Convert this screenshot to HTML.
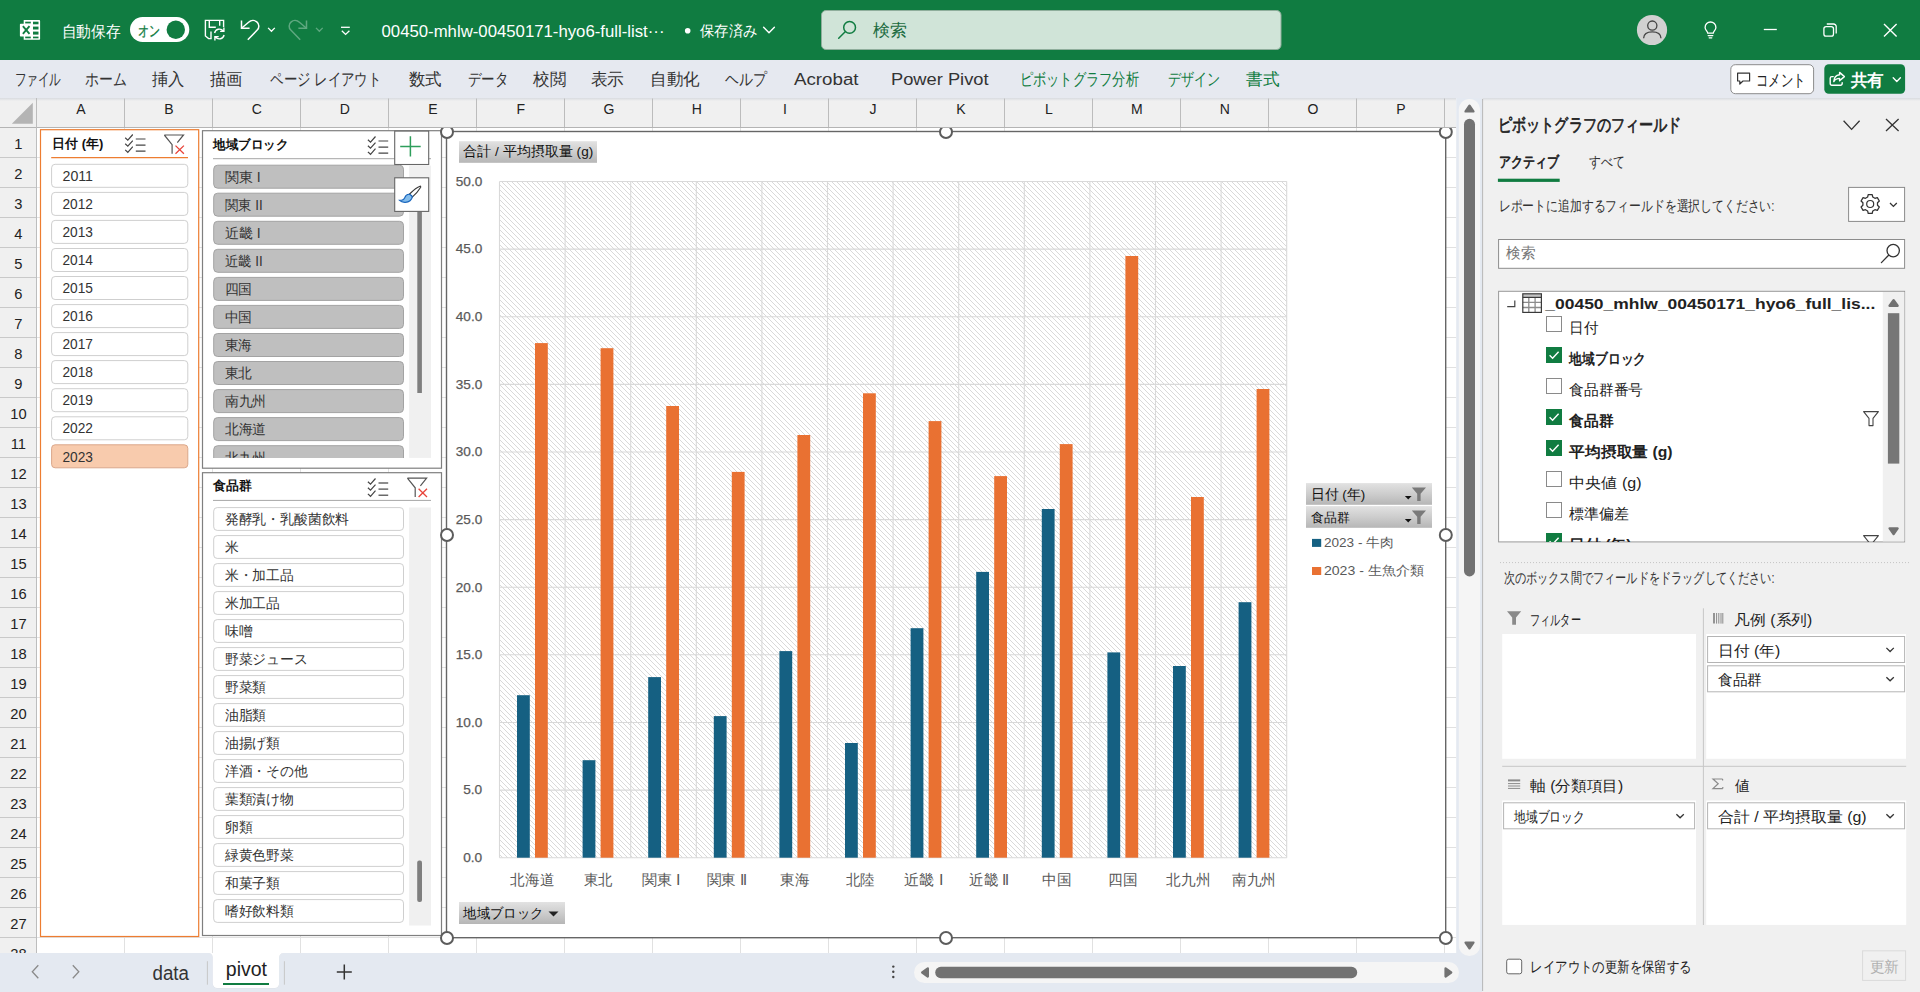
<!DOCTYPE html><html><head><meta charset="utf-8"><title>Excel</title><style>*{margin:0;padding:0}html,body{width:1920px;height:992px;overflow:hidden;background:#fff}svg{display:block;font-family:"Liberation Sans",sans-serif}</style></head><body>
<svg width="1920" height="992" viewBox="0 0 1920 992">
<defs>
<pattern id="hat" width="5" height="5" patternUnits="userSpaceOnUse"><rect width="5" height="5" fill="#fff"/><path d="M-1 -1 L6 6 M-1 4 L1 6 M4 -1 L6 1" stroke="#d6d6d6" stroke-width="0.92"/></pattern>
<linearGradient id="btn" x1="0" y1="0" x2="0" y2="1"><stop offset="0" stop-color="#e2e2e2"/><stop offset="0.5" stop-color="#cdcdcd"/><stop offset="1" stop-color="#b6b6b6"/></linearGradient>
<linearGradient id="hsh" x1="0" y1="0" x2="0" y2="1"><stop offset="0" stop-color="#d8dbe0"/><stop offset="1" stop-color="#f0f0f0"/></linearGradient>
<clipPath id="cs2"><rect x="203" y="164" width="237" height="294"/></clipPath>
<clipPath id="cfl"><rect x="1499" y="292" width="405" height="250"/></clipPath>
<clipPath id="cgrid"><rect x="0" y="98" width="1456.2" height="855"/></clipPath>
<clipPath id="ccell"><rect x="37" y="128" width="1419.2" height="825"/></clipPath>
</defs>
<rect x="0" y="0" width="1920" height="60" fill="#107c41"/>
<path d="M23.7 20.1 H39.3 a0.8 0.8 0 0 1 0.8 0.8 V39 a0.8 0.8 0 0 1 -0.8 0.8 H23.7 V36.4 H20.6 a0.7 0.7 0 0 1 -0.7 -0.7 V24.4 a0.7 0.7 0 0 1 0.7 -0.7 H23.7 Z" fill="#fff" stroke="none" stroke-width="0"/>
<rect x="33" y="21.7" width="5.5" height="2.6" fill="#107c41"/>
<rect x="33" y="26.6" width="5.5" height="2.9" fill="#107c41"/>
<rect x="33" y="31.6" width="5.5" height="3.0" fill="#107c41"/>
<rect x="33" y="36.6" width="5.5" height="1.7" fill="#107c41"/>
<rect x="25.2" y="21.7" width="5.6" height="1.7" fill="#107c41"/>
<rect x="25.2" y="36.6" width="5.6" height="1.7" fill="#107c41"/>
<path d="M22.9 26.2 L29.5 33.8 M29.5 26.2 L22.9 33.8" fill="none" stroke="#107c41" stroke-width="1.9"/>
<text x="61.5" y="36.6" font-size="16.4" fill="#fff" textLength="59.0" lengthAdjust="spacingAndGlyphs">自動保存</text>
<rect x="130" y="17" width="59.3" height="25" fill="#fff" rx="12.5"/>
<text x="137.6" y="35.6" font-size="15" fill="#107c41" stroke="#107c41" stroke-width="0.3" textLength="22.0" lengthAdjust="spacingAndGlyphs">オン</text>
<circle cx="175.8" cy="29.8" r="9.2" fill="#107c41"/>
<g stroke="#fff" fill="none" stroke-width="1.4">
<path d="M211.6 38.6 H208.6 L205.4 36 V20.4 H223.6 V27"/>
<path d="M209.3 20.6 V27.2 H215.8 M219.7 20.6 V25.8"/>
<path d="M211 31.6 V38.4"/>
<path d="M214.6 33 a4.9 4.9 0 0 1 8.6 -2 M223.9 27.6 V31.4 H220.1"/>
<path d="M224.1 35 a4.9 4.9 0 0 1 -8.6 2 M214.9 40.4 V36.6 H218.7"/>
</g>
<g stroke="#fff" fill="none" stroke-width="1.5">
<path d="M241.5 20.6 V28.3 H249.6"/>
<path d="M241.8 28 L248.6 22.2 C251 20.2 254.6 20 256.8 21.9 C259.4 24.1 259.5 27.7 257.2 30.1 L247.8 39.8"/>
<path d="M268.1 27.9 L271.45 31.3 L274.8 27.9" stroke-width="1.3"/>
</g>
<g stroke="#5fa880" fill="none" stroke-width="1.5">
<path d="M306.5 20.6 V28.3 H298.4"/>
<path d="M306.2 28 L299.4 22.2 C297 20.2 293.4 20 291.2 21.9 C288.6 24.1 288.5 27.7 290.8 30.1 L300.2 39.8"/>
<path d="M316 27.9 L319.35 31.3 L322.7 27.9" stroke-width="1.3"/>
</g>
<g stroke="#fff" fill="none" stroke-width="1.3"><path d="M341 27.3 H349.8"/><path d="M341.8 30.7 L345.6 34.4 L349.4 30.7"/></g>
<text x="381.5" y="36.5" font-size="16" fill="#fff" textLength="283.0" lengthAdjust="spacingAndGlyphs">00450-mhlw-00450171-hyo6-full-list···</text>
<circle cx="687.7" cy="30.8" r="2.8" fill="#fff"/>
<text x="699.8" y="36.3" font-size="15" fill="#fff" textLength="57.5" lengthAdjust="spacingAndGlyphs">保存済み</text>
<path d="M763.6 27.2 L769 32.8 L774.4 27.2" fill="none" stroke="#fff" stroke-width="1.4" stroke-linecap="round" stroke-linejoin="round"/>
<rect x="821.5" y="10.5" width="459.5" height="39" fill="#d0e4d8" stroke="#8fae9c" stroke-width="1" rx="4.5"/>
<g stroke="#107c41" fill="none" stroke-width="1.5" stroke-linecap="round"><circle cx="849.6" cy="27.4" r="5.9"/><path d="M845.2 31.8 L838.7 38.3"/></g>
<text x="872.9" y="36.3" font-size="16.5" fill="#1b6b3f" textLength="34.0" lengthAdjust="spacingAndGlyphs">検索</text>
<circle cx="1652" cy="30" r="15.1" fill="#d1d1d1"/>
<g stroke="#444" fill="none" stroke-width="1.3"><circle cx="1652.3" cy="25.6" r="4.6"/><path d="M1643.6 38.2 C1643.8 33.6 1647.5 31.8 1652.3 31.8 C1657.1 31.8 1660.8 33.6 1661 38.2"/></g>
<g stroke="#fff" fill="none" stroke-width="1.3" stroke-linecap="round" stroke-linejoin="round">
<path d="M1707.7 33.2 C1707.7 31.4 1705.1 30.2 1705.1 27.4 a5.4 5.4 0 0 1 10.8 0 C1715.9 30.2 1713.3 31.4 1713.3 33.2 Z"/>
<path d="M1708.2 35.6 H1712.8 M1709.2 37.8 H1711.8"/></g>
<line x1="1763.8" y1="29.5" x2="1776.8" y2="29.5" stroke="#fff" stroke-width="1.3"/>
<g stroke="#fff" fill="none" stroke-width="1.3"><rect x="1823.9" y="26.6" width="9.6" height="9.6" rx="2.2"/><path d="M1826.8 24 H1833.6 a2.6 2.6 0 0 1 2.6 2.6 V33.4"/></g>
<path d="M1884 24 L1896.6 36.4 M1896.6 24 L1884 36.4" fill="none" stroke="#fff" stroke-width="1.4"/>
<rect x="0" y="60" width="1920" height="38" fill="#e6e9f0"/>
<text x="14.6" y="85.2" font-size="17.3" fill="#333" textLength="46.5" lengthAdjust="spacingAndGlyphs">ファイル</text>
<text x="84.8" y="85.2" font-size="17.3" fill="#333" textLength="41.7" lengthAdjust="spacingAndGlyphs">ホーム</text>
<text x="151.5" y="85.2" font-size="17.3" fill="#333" textLength="32.5" lengthAdjust="spacingAndGlyphs">挿入</text>
<text x="209.8" y="85.2" font-size="17.3" fill="#333" textLength="32.5" lengthAdjust="spacingAndGlyphs">描画</text>
<text x="270.2" y="85.2" font-size="17.3" fill="#333" textLength="111.1" lengthAdjust="spacingAndGlyphs">ページ レイアウト</text>
<text x="408.5" y="85.2" font-size="17.3" fill="#333" textLength="33.0" lengthAdjust="spacingAndGlyphs">数式</text>
<text x="467.5" y="85.2" font-size="17.3" fill="#333" textLength="40.5" lengthAdjust="spacingAndGlyphs">データ</text>
<text x="533.0" y="85.2" font-size="17.3" fill="#333" textLength="33.0" lengthAdjust="spacingAndGlyphs">校閲</text>
<text x="590.8" y="85.2" font-size="17.3" fill="#333" textLength="33.4" lengthAdjust="spacingAndGlyphs">表示</text>
<text x="650.2" y="85.2" font-size="17.3" fill="#333" textLength="49.6" lengthAdjust="spacingAndGlyphs">自動化</text>
<text x="724.8" y="85.2" font-size="17.3" fill="#333" textLength="41.7" lengthAdjust="spacingAndGlyphs">ヘルプ</text>
<text x="794.0" y="85.2" font-size="17.3" fill="#333" textLength="64.5" lengthAdjust="spacingAndGlyphs">Acrobat</text>
<text x="891.0" y="85.2" font-size="17.3" fill="#333" textLength="97.6" lengthAdjust="spacingAndGlyphs">Power Pivot</text>
<text x="1019.7" y="85.2" font-size="17.3" fill="#107c41" textLength="119.2" lengthAdjust="spacingAndGlyphs">ピボットグラフ分析</text>
<text x="1167.9" y="85.2" font-size="17.3" fill="#107c41" textLength="52.2" lengthAdjust="spacingAndGlyphs">デザイン</text>
<text x="1246.4" y="85.2" font-size="17.3" fill="#107c41" textLength="33.3" lengthAdjust="spacingAndGlyphs">書式</text>
<rect x="1730.8" y="64.7" width="82.8" height="29" fill="#fff" stroke="#8c8c8c" stroke-width="1" rx="4.5"/>
<path d="M1737.6 73.2 H1749.6 V81 H1743 L1739.8 84 V81 H1737.6 Z" fill="none" stroke="#333" stroke-width="1.2" stroke-linejoin="round"/>
<text x="1755.8" y="86.2" font-size="16.5" fill="#222" textLength="49.5" lengthAdjust="spacingAndGlyphs">コメント</text>
<rect x="1824.3" y="64.2" width="80.8" height="29.6" fill="#107c41" rx="4.5"/>
<g stroke="#fff" fill="none" stroke-width="1.4" stroke-linecap="round" stroke-linejoin="round">
<path d="M1833.2 76.6 H1831.8 a1.6 1.6 0 0 0 -1.6 1.6 V83.6 a1.6 1.6 0 0 0 1.6 1.6 H1840.6 a1.6 1.6 0 0 0 1.6 -1.6 V82.6"/>
<path d="M1839.6 72.4 L1844.4 76.6 L1839.6 80.8 V78.4 C1837 78.4 1835 79.4 1833.8 81.6 C1834 77.6 1836.2 75.2 1839.6 74.8 Z"/></g>
<text x="1850.5" y="86.2" font-size="17" fill="#fff" textLength="33.0" lengthAdjust="spacingAndGlyphs" font-weight="bold">共有</text>
<path d="M1893.2 77.8 L1896.8 81.4 L1900.4 77.8" fill="none" stroke="#fff" stroke-width="1.4" stroke-linecap="round" stroke-linejoin="round"/>
<rect x="0" y="98" width="1456.2" height="855" fill="#fff"/>
<g clip-path="url(#cgrid)">
<line x1="36.5" y1="127" x2="36.5" y2="953" stroke="#e1e1e1" stroke-width="1"/>
<line x1="124.5" y1="127" x2="124.5" y2="953" stroke="#e1e1e1" stroke-width="1"/>
<line x1="212.5" y1="127" x2="212.5" y2="953" stroke="#e1e1e1" stroke-width="1"/>
<line x1="300.5" y1="127" x2="300.5" y2="953" stroke="#e1e1e1" stroke-width="1"/>
<line x1="388.5" y1="127" x2="388.5" y2="953" stroke="#e1e1e1" stroke-width="1"/>
<line x1="476.5" y1="127" x2="476.5" y2="953" stroke="#e1e1e1" stroke-width="1"/>
<line x1="564.5" y1="127" x2="564.5" y2="953" stroke="#e1e1e1" stroke-width="1"/>
<line x1="652.5" y1="127" x2="652.5" y2="953" stroke="#e1e1e1" stroke-width="1"/>
<line x1="740.5" y1="127" x2="740.5" y2="953" stroke="#e1e1e1" stroke-width="1"/>
<line x1="828.5" y1="127" x2="828.5" y2="953" stroke="#e1e1e1" stroke-width="1"/>
<line x1="916.5" y1="127" x2="916.5" y2="953" stroke="#e1e1e1" stroke-width="1"/>
<line x1="1004.5" y1="127" x2="1004.5" y2="953" stroke="#e1e1e1" stroke-width="1"/>
<line x1="1092.5" y1="127" x2="1092.5" y2="953" stroke="#e1e1e1" stroke-width="1"/>
<line x1="1180.5" y1="127" x2="1180.5" y2="953" stroke="#e1e1e1" stroke-width="1"/>
<line x1="1268.5" y1="127" x2="1268.5" y2="953" stroke="#e1e1e1" stroke-width="1"/>
<line x1="1356.5" y1="127" x2="1356.5" y2="953" stroke="#e1e1e1" stroke-width="1"/>
<line x1="1444.5" y1="127" x2="1444.5" y2="953" stroke="#e1e1e1" stroke-width="1"/>
<line x1="37" y1="157.5" x2="1459" y2="157.5" stroke="#e1e1e1" stroke-width="1"/>
<line x1="37" y1="187.5" x2="1459" y2="187.5" stroke="#e1e1e1" stroke-width="1"/>
<line x1="37" y1="217.5" x2="1459" y2="217.5" stroke="#e1e1e1" stroke-width="1"/>
<line x1="37" y1="247.5" x2="1459" y2="247.5" stroke="#e1e1e1" stroke-width="1"/>
<line x1="37" y1="277.5" x2="1459" y2="277.5" stroke="#e1e1e1" stroke-width="1"/>
<line x1="37" y1="307.5" x2="1459" y2="307.5" stroke="#e1e1e1" stroke-width="1"/>
<line x1="37" y1="337.5" x2="1459" y2="337.5" stroke="#e1e1e1" stroke-width="1"/>
<line x1="37" y1="367.5" x2="1459" y2="367.5" stroke="#e1e1e1" stroke-width="1"/>
<line x1="37" y1="397.5" x2="1459" y2="397.5" stroke="#e1e1e1" stroke-width="1"/>
<line x1="37" y1="427.5" x2="1459" y2="427.5" stroke="#e1e1e1" stroke-width="1"/>
<line x1="37" y1="457.5" x2="1459" y2="457.5" stroke="#e1e1e1" stroke-width="1"/>
<line x1="37" y1="487.5" x2="1459" y2="487.5" stroke="#e1e1e1" stroke-width="1"/>
<line x1="37" y1="517.5" x2="1459" y2="517.5" stroke="#e1e1e1" stroke-width="1"/>
<line x1="37" y1="547.5" x2="1459" y2="547.5" stroke="#e1e1e1" stroke-width="1"/>
<line x1="37" y1="577.5" x2="1459" y2="577.5" stroke="#e1e1e1" stroke-width="1"/>
<line x1="37" y1="607.5" x2="1459" y2="607.5" stroke="#e1e1e1" stroke-width="1"/>
<line x1="37" y1="637.5" x2="1459" y2="637.5" stroke="#e1e1e1" stroke-width="1"/>
<line x1="37" y1="667.5" x2="1459" y2="667.5" stroke="#e1e1e1" stroke-width="1"/>
<line x1="37" y1="697.5" x2="1459" y2="697.5" stroke="#e1e1e1" stroke-width="1"/>
<line x1="37" y1="727.5" x2="1459" y2="727.5" stroke="#e1e1e1" stroke-width="1"/>
<line x1="37" y1="757.5" x2="1459" y2="757.5" stroke="#e1e1e1" stroke-width="1"/>
<line x1="37" y1="787.5" x2="1459" y2="787.5" stroke="#e1e1e1" stroke-width="1"/>
<line x1="37" y1="817.5" x2="1459" y2="817.5" stroke="#e1e1e1" stroke-width="1"/>
<line x1="37" y1="847.5" x2="1459" y2="847.5" stroke="#e1e1e1" stroke-width="1"/>
<line x1="37" y1="877.5" x2="1459" y2="877.5" stroke="#e1e1e1" stroke-width="1"/>
<line x1="37" y1="907.5" x2="1459" y2="907.5" stroke="#e1e1e1" stroke-width="1"/>
<line x1="37" y1="937.5" x2="1459" y2="937.5" stroke="#e1e1e1" stroke-width="1"/>
<line x1="37" y1="967.5" x2="1459" y2="967.5" stroke="#e1e1e1" stroke-width="1"/>
<rect x="0" y="98" width="1459" height="29.5" fill="#f0f0f0"/>
<rect x="0" y="98" width="1459" height="3" fill="url(#hsh)"/>
<rect x="0" y="127" width="37" height="826" fill="#f0f0f0"/>
<text x="80.9" y="113.8" font-size="14" fill="#222" text-anchor="middle">A</text>
<line x1="124.5" y1="98.5" x2="124.5" y2="127" stroke="#bcbcbc" stroke-width="1"/>
<text x="168.9" y="113.8" font-size="14" fill="#222" text-anchor="middle">B</text>
<line x1="212.5" y1="98.5" x2="212.5" y2="127" stroke="#bcbcbc" stroke-width="1"/>
<text x="256.9" y="113.8" font-size="14" fill="#222" text-anchor="middle">C</text>
<line x1="300.5" y1="98.5" x2="300.5" y2="127" stroke="#bcbcbc" stroke-width="1"/>
<text x="344.9" y="113.8" font-size="14" fill="#222" text-anchor="middle">D</text>
<line x1="388.5" y1="98.5" x2="388.5" y2="127" stroke="#bcbcbc" stroke-width="1"/>
<text x="432.9" y="113.8" font-size="14" fill="#222" text-anchor="middle">E</text>
<line x1="476.5" y1="98.5" x2="476.5" y2="127" stroke="#bcbcbc" stroke-width="1"/>
<text x="520.9" y="113.8" font-size="14" fill="#222" text-anchor="middle">F</text>
<line x1="564.5" y1="98.5" x2="564.5" y2="127" stroke="#bcbcbc" stroke-width="1"/>
<text x="608.9" y="113.8" font-size="14" fill="#222" text-anchor="middle">G</text>
<line x1="652.5" y1="98.5" x2="652.5" y2="127" stroke="#bcbcbc" stroke-width="1"/>
<text x="696.9" y="113.8" font-size="14" fill="#222" text-anchor="middle">H</text>
<line x1="740.5" y1="98.5" x2="740.5" y2="127" stroke="#bcbcbc" stroke-width="1"/>
<text x="784.9" y="113.8" font-size="14" fill="#222" text-anchor="middle">I</text>
<line x1="828.5" y1="98.5" x2="828.5" y2="127" stroke="#bcbcbc" stroke-width="1"/>
<text x="872.9" y="113.8" font-size="14" fill="#222" text-anchor="middle">J</text>
<line x1="916.5" y1="98.5" x2="916.5" y2="127" stroke="#bcbcbc" stroke-width="1"/>
<text x="960.9" y="113.8" font-size="14" fill="#222" text-anchor="middle">K</text>
<line x1="1004.5" y1="98.5" x2="1004.5" y2="127" stroke="#bcbcbc" stroke-width="1"/>
<text x="1048.9" y="113.8" font-size="14" fill="#222" text-anchor="middle">L</text>
<line x1="1092.5" y1="98.5" x2="1092.5" y2="127" stroke="#bcbcbc" stroke-width="1"/>
<text x="1136.9" y="113.8" font-size="14" fill="#222" text-anchor="middle">M</text>
<line x1="1180.5" y1="98.5" x2="1180.5" y2="127" stroke="#bcbcbc" stroke-width="1"/>
<text x="1224.9" y="113.8" font-size="14" fill="#222" text-anchor="middle">N</text>
<line x1="1268.5" y1="98.5" x2="1268.5" y2="127" stroke="#bcbcbc" stroke-width="1"/>
<text x="1312.9" y="113.8" font-size="14" fill="#222" text-anchor="middle">O</text>
<line x1="1356.5" y1="98.5" x2="1356.5" y2="127" stroke="#bcbcbc" stroke-width="1"/>
<text x="1400.9" y="113.8" font-size="14" fill="#222" text-anchor="middle">P</text>
<line x1="1444.5" y1="98.5" x2="1444.5" y2="127" stroke="#bcbcbc" stroke-width="1"/>
<line x1="0" y1="127.5" x2="1459" y2="127.5" stroke="#b4b4b4" stroke-width="1"/>
<line x1="36.5" y1="98" x2="36.5" y2="953" stroke="#bdbdbd" stroke-width="1"/>
<line x1="0" y1="157.5" x2="36" y2="157.5" stroke="#c9c9c9" stroke-width="1"/>
<text x="18.4" y="149.3" font-size="14.7" fill="#222" text-anchor="middle">1</text>
<line x1="0" y1="187.5" x2="36" y2="187.5" stroke="#c9c9c9" stroke-width="1"/>
<text x="18.4" y="179.3" font-size="14.7" fill="#222" text-anchor="middle">2</text>
<line x1="0" y1="217.5" x2="36" y2="217.5" stroke="#c9c9c9" stroke-width="1"/>
<text x="18.4" y="209.3" font-size="14.7" fill="#222" text-anchor="middle">3</text>
<line x1="0" y1="247.5" x2="36" y2="247.5" stroke="#c9c9c9" stroke-width="1"/>
<text x="18.4" y="239.3" font-size="14.7" fill="#222" text-anchor="middle">4</text>
<line x1="0" y1="277.5" x2="36" y2="277.5" stroke="#c9c9c9" stroke-width="1"/>
<text x="18.4" y="269.3" font-size="14.7" fill="#222" text-anchor="middle">5</text>
<line x1="0" y1="307.5" x2="36" y2="307.5" stroke="#c9c9c9" stroke-width="1"/>
<text x="18.4" y="299.3" font-size="14.7" fill="#222" text-anchor="middle">6</text>
<line x1="0" y1="337.5" x2="36" y2="337.5" stroke="#c9c9c9" stroke-width="1"/>
<text x="18.4" y="329.3" font-size="14.7" fill="#222" text-anchor="middle">7</text>
<line x1="0" y1="367.5" x2="36" y2="367.5" stroke="#c9c9c9" stroke-width="1"/>
<text x="18.4" y="359.3" font-size="14.7" fill="#222" text-anchor="middle">8</text>
<line x1="0" y1="397.5" x2="36" y2="397.5" stroke="#c9c9c9" stroke-width="1"/>
<text x="18.4" y="389.3" font-size="14.7" fill="#222" text-anchor="middle">9</text>
<line x1="0" y1="427.5" x2="36" y2="427.5" stroke="#c9c9c9" stroke-width="1"/>
<text x="18.4" y="419.3" font-size="14.7" fill="#222" text-anchor="middle">10</text>
<line x1="0" y1="457.5" x2="36" y2="457.5" stroke="#c9c9c9" stroke-width="1"/>
<text x="18.4" y="449.3" font-size="14.7" fill="#222" text-anchor="middle">11</text>
<line x1="0" y1="487.5" x2="36" y2="487.5" stroke="#c9c9c9" stroke-width="1"/>
<text x="18.4" y="479.3" font-size="14.7" fill="#222" text-anchor="middle">12</text>
<line x1="0" y1="517.5" x2="36" y2="517.5" stroke="#c9c9c9" stroke-width="1"/>
<text x="18.4" y="509.3" font-size="14.7" fill="#222" text-anchor="middle">13</text>
<line x1="0" y1="547.5" x2="36" y2="547.5" stroke="#c9c9c9" stroke-width="1"/>
<text x="18.4" y="539.3" font-size="14.7" fill="#222" text-anchor="middle">14</text>
<line x1="0" y1="577.5" x2="36" y2="577.5" stroke="#c9c9c9" stroke-width="1"/>
<text x="18.4" y="569.3" font-size="14.7" fill="#222" text-anchor="middle">15</text>
<line x1="0" y1="607.5" x2="36" y2="607.5" stroke="#c9c9c9" stroke-width="1"/>
<text x="18.4" y="599.3" font-size="14.7" fill="#222" text-anchor="middle">16</text>
<line x1="0" y1="637.5" x2="36" y2="637.5" stroke="#c9c9c9" stroke-width="1"/>
<text x="18.4" y="629.3" font-size="14.7" fill="#222" text-anchor="middle">17</text>
<line x1="0" y1="667.5" x2="36" y2="667.5" stroke="#c9c9c9" stroke-width="1"/>
<text x="18.4" y="659.3" font-size="14.7" fill="#222" text-anchor="middle">18</text>
<line x1="0" y1="697.5" x2="36" y2="697.5" stroke="#c9c9c9" stroke-width="1"/>
<text x="18.4" y="689.3" font-size="14.7" fill="#222" text-anchor="middle">19</text>
<line x1="0" y1="727.5" x2="36" y2="727.5" stroke="#c9c9c9" stroke-width="1"/>
<text x="18.4" y="719.3" font-size="14.7" fill="#222" text-anchor="middle">20</text>
<line x1="0" y1="757.5" x2="36" y2="757.5" stroke="#c9c9c9" stroke-width="1"/>
<text x="18.4" y="749.3" font-size="14.7" fill="#222" text-anchor="middle">21</text>
<line x1="0" y1="787.5" x2="36" y2="787.5" stroke="#c9c9c9" stroke-width="1"/>
<text x="18.4" y="779.3" font-size="14.7" fill="#222" text-anchor="middle">22</text>
<line x1="0" y1="817.5" x2="36" y2="817.5" stroke="#c9c9c9" stroke-width="1"/>
<text x="18.4" y="809.3" font-size="14.7" fill="#222" text-anchor="middle">23</text>
<line x1="0" y1="847.5" x2="36" y2="847.5" stroke="#c9c9c9" stroke-width="1"/>
<text x="18.4" y="839.3" font-size="14.7" fill="#222" text-anchor="middle">24</text>
<line x1="0" y1="877.5" x2="36" y2="877.5" stroke="#c9c9c9" stroke-width="1"/>
<text x="18.4" y="869.3" font-size="14.7" fill="#222" text-anchor="middle">25</text>
<line x1="0" y1="907.5" x2="36" y2="907.5" stroke="#c9c9c9" stroke-width="1"/>
<text x="18.4" y="899.3" font-size="14.7" fill="#222" text-anchor="middle">26</text>
<line x1="0" y1="937.5" x2="36" y2="937.5" stroke="#c9c9c9" stroke-width="1"/>
<text x="18.4" y="929.3" font-size="14.7" fill="#222" text-anchor="middle">27</text>
<line x1="0" y1="967.5" x2="36" y2="967.5" stroke="#c9c9c9" stroke-width="1"/>
<text x="18.4" y="959.3" font-size="14.7" fill="#222" text-anchor="middle">28</text>
<path d="M32.8 102.8 V123.8 H11.8 Z" fill="#b4b4b4" stroke="none" stroke-width="0"/>
<g clip-path="url(#ccell)">
<rect x="40.5" y="129.7" width="158.2" height="806.8" fill="#fff" stroke="#ed7d31" stroke-width="1.2"/>
<text x="52.4" y="147.7" font-size="13" fill="#111" textLength="51.0" lengthAdjust="spacingAndGlyphs" font-weight="bold">日付 (年)</text>
<line x1="51.2" y1="157.7" x2="188" y2="157.7" stroke="#ed7d31" stroke-width="1.2"/>
<g stroke="#444" fill="none" stroke-width="1.2">
<path d="M125.2 137.7 L127.8 140.1 L132.8 134.5"/>
<path d="M135.8 139.0 H145.5"/>
<path d="M125.2 143.8 L127.8 146.2 L132.8 140.6"/>
<path d="M135.8 145.1 H145.5"/>
<path d="M125.2 149.9 L127.8 152.3 L132.8 146.7"/>
<path d="M135.8 151.2 H145.5"/>
</g>
<path d="M164.3 135.0 H183.5 L177.3 142.6 M164.3 135.0 L172.1 144.6 V153.8" stroke="#555" stroke-width="1.2" fill="none"/>
<path d="M175.5 145.6 L183.9 153.8 M183.9 145.6 L175.5 153.8" stroke="#e8443a" stroke-width="1.3" fill="none"/>
<rect x="51.6" y="164.3" width="136.2" height="23" fill="#fff" stroke="#cfcfcf" stroke-width="1" rx="3.5"/>
<text x="62.5" y="181.0" font-size="14" fill="#333" textLength="30.5" lengthAdjust="spacingAndGlyphs">2011</text>
<rect x="51.6" y="192.4" width="136.2" height="23" fill="#fff" stroke="#cfcfcf" stroke-width="1" rx="3.5"/>
<text x="62.5" y="209.1" font-size="14" fill="#333" textLength="30.5" lengthAdjust="spacingAndGlyphs">2012</text>
<rect x="51.6" y="220.4" width="136.2" height="23" fill="#fff" stroke="#cfcfcf" stroke-width="1" rx="3.5"/>
<text x="62.5" y="237.1" font-size="14" fill="#333" textLength="30.5" lengthAdjust="spacingAndGlyphs">2013</text>
<rect x="51.6" y="248.5" width="136.2" height="23" fill="#fff" stroke="#cfcfcf" stroke-width="1" rx="3.5"/>
<text x="62.5" y="265.2" font-size="14" fill="#333" textLength="30.5" lengthAdjust="spacingAndGlyphs">2014</text>
<rect x="51.6" y="276.5" width="136.2" height="23" fill="#fff" stroke="#cfcfcf" stroke-width="1" rx="3.5"/>
<text x="62.5" y="293.2" font-size="14" fill="#333" textLength="30.5" lengthAdjust="spacingAndGlyphs">2015</text>
<rect x="51.6" y="304.6" width="136.2" height="23" fill="#fff" stroke="#cfcfcf" stroke-width="1" rx="3.5"/>
<text x="62.5" y="321.2" font-size="14" fill="#333" textLength="30.5" lengthAdjust="spacingAndGlyphs">2016</text>
<rect x="51.6" y="332.6" width="136.2" height="23" fill="#fff" stroke="#cfcfcf" stroke-width="1" rx="3.5"/>
<text x="62.5" y="349.3" font-size="14" fill="#333" textLength="30.5" lengthAdjust="spacingAndGlyphs">2017</text>
<rect x="51.6" y="360.6" width="136.2" height="23" fill="#fff" stroke="#cfcfcf" stroke-width="1" rx="3.5"/>
<text x="62.5" y="377.3" font-size="14" fill="#333" textLength="30.5" lengthAdjust="spacingAndGlyphs">2018</text>
<rect x="51.6" y="388.7" width="136.2" height="23" fill="#fff" stroke="#cfcfcf" stroke-width="1" rx="3.5"/>
<text x="62.5" y="405.4" font-size="14" fill="#333" textLength="30.5" lengthAdjust="spacingAndGlyphs">2019</text>
<rect x="51.6" y="416.8" width="136.2" height="23" fill="#fff" stroke="#cfcfcf" stroke-width="1" rx="3.5"/>
<text x="62.5" y="433.4" font-size="14" fill="#333" textLength="30.5" lengthAdjust="spacingAndGlyphs">2022</text>
<rect x="51.6" y="444.8" width="136.2" height="23" fill="#f8cbad" stroke="#dba78a" stroke-width="1" rx="3.5"/>
<text x="62.5" y="461.5" font-size="14" fill="#333" textLength="30.5" lengthAdjust="spacingAndGlyphs">2023</text>
<rect x="202.5" y="130.7" width="239" height="337.5" fill="#fff" stroke="#7f7f7f" stroke-width="1.2"/>
<text x="213.2" y="148.6" font-size="13" fill="#111" textLength="75.0" lengthAdjust="spacingAndGlyphs" font-weight="bold">地域ブロック</text>
<line x1="213" y1="158.7" x2="431" y2="158.7" stroke="#a6a6a6" stroke-width="1"/>
<g stroke="#444" fill="none" stroke-width="1.2">
<path d="M367.9 139.7 L370.5 142.1 L375.5 136.5"/>
<path d="M378.5 141.0 H388.2"/>
<path d="M367.9 145.8 L370.5 148.2 L375.5 142.6"/>
<path d="M378.5 147.1 H388.2"/>
<path d="M367.9 151.9 L370.5 154.3 L375.5 148.7"/>
<path d="M378.5 153.2 H388.2"/>
</g>
<rect x="409.1" y="165.6" width="21.9" height="292.3" fill="#f0f0f0"/>
<rect x="417.3" y="188" width="4.6" height="205" fill="#7f7f7f"/>
<g clip-path="url(#cs2)">
<rect x="213.7" y="165.2" width="189.8" height="23" fill="#bfbfbf" stroke="#a3a3a3" stroke-width="1" rx="4"/>
<text x="224.7" y="182.0" font-size="14" fill="#333" textLength="36.0" lengthAdjust="spacingAndGlyphs">関東 I</text>
<rect x="213.7" y="193.2" width="189.8" height="23" fill="#bfbfbf" stroke="#a3a3a3" stroke-width="1" rx="4"/>
<text x="224.7" y="210.1" font-size="14" fill="#333" textLength="38.0" lengthAdjust="spacingAndGlyphs">関東 II</text>
<rect x="213.7" y="221.3" width="189.8" height="23" fill="#bfbfbf" stroke="#a3a3a3" stroke-width="1" rx="4"/>
<text x="224.7" y="238.1" font-size="14" fill="#333" textLength="36.0" lengthAdjust="spacingAndGlyphs">近畿 I</text>
<rect x="213.7" y="249.3" width="189.8" height="23" fill="#bfbfbf" stroke="#a3a3a3" stroke-width="1" rx="4"/>
<text x="224.7" y="266.1" font-size="14" fill="#333" textLength="38.0" lengthAdjust="spacingAndGlyphs">近畿 II</text>
<rect x="213.7" y="277.4" width="189.8" height="23" fill="#bfbfbf" stroke="#a3a3a3" stroke-width="1" rx="4"/>
<text x="224.7" y="294.2" font-size="14" fill="#333" textLength="27.5" lengthAdjust="spacingAndGlyphs">四国</text>
<rect x="213.7" y="305.4" width="189.8" height="23" fill="#bfbfbf" stroke="#a3a3a3" stroke-width="1" rx="4"/>
<text x="224.7" y="322.2" font-size="14" fill="#333" textLength="27.5" lengthAdjust="spacingAndGlyphs">中国</text>
<rect x="213.7" y="333.5" width="189.8" height="23" fill="#bfbfbf" stroke="#a3a3a3" stroke-width="1" rx="4"/>
<text x="224.7" y="350.3" font-size="14" fill="#333" textLength="27.5" lengthAdjust="spacingAndGlyphs">東海</text>
<rect x="213.7" y="361.5" width="189.8" height="23" fill="#bfbfbf" stroke="#a3a3a3" stroke-width="1" rx="4"/>
<text x="224.7" y="378.3" font-size="14" fill="#333" textLength="27.5" lengthAdjust="spacingAndGlyphs">東北</text>
<rect x="213.7" y="389.6" width="189.8" height="23" fill="#bfbfbf" stroke="#a3a3a3" stroke-width="1" rx="4"/>
<text x="224.7" y="406.4" font-size="14" fill="#333" textLength="41.5" lengthAdjust="spacingAndGlyphs">南九州</text>
<rect x="213.7" y="417.6" width="189.8" height="23" fill="#bfbfbf" stroke="#a3a3a3" stroke-width="1" rx="4"/>
<text x="224.7" y="434.4" font-size="14" fill="#333" textLength="41.5" lengthAdjust="spacingAndGlyphs">北海道</text>
<rect x="213.7" y="445.7" width="189.8" height="23" fill="#bfbfbf" stroke="#a3a3a3" stroke-width="1" rx="4"/>
<text x="224.7" y="462.5" font-size="14" fill="#333" textLength="41.5" lengthAdjust="spacingAndGlyphs">北九州</text>
</g>
<rect x="202.5" y="472.7" width="239" height="462.8" fill="#fff" stroke="#7f7f7f" stroke-width="1.2"/>
<text x="213.2" y="490.2" font-size="13" fill="#111" textLength="38.6" lengthAdjust="spacingAndGlyphs" font-weight="bold">食品群</text>
<line x1="213" y1="500.4" x2="431" y2="500.4" stroke="#a6a6a6" stroke-width="1"/>
<g stroke="#444" fill="none" stroke-width="1.2">
<path d="M367.9 481.7 L370.5 484.1 L375.5 478.5"/>
<path d="M378.5 483.0 H388.2"/>
<path d="M367.9 487.8 L370.5 490.2 L375.5 484.6"/>
<path d="M378.5 489.1 H388.2"/>
<path d="M367.9 493.9 L370.5 496.3 L375.5 490.7"/>
<path d="M378.5 495.2 H388.2"/>
</g>
<path d="M407.4 478.2 H426.6 L420.4 485.8 M407.4 478.2 L415.2 487.8 V497.0" stroke="#555" stroke-width="1.2" fill="none"/>
<path d="M418.6 488.8 L427.0 497.0 M427.0 488.8 L418.6 497.0" stroke="#e8443a" stroke-width="1.3" fill="none"/>
<rect x="409.1" y="507.5" width="21.9" height="418" fill="#f0f0f0"/>
<rect x="417.2" y="860.5" width="4.8" height="41.5" fill="#7f7f7f" rx="2"/>
<rect x="213.7" y="507.6" width="189.8" height="22.8" fill="#fff" stroke="#cfcfcf" stroke-width="1" rx="3.5"/>
<text x="224.7" y="524.2" font-size="14" fill="#333" textLength="124.5" lengthAdjust="spacingAndGlyphs">発酵乳・乳酸菌飲料</text>
<rect x="213.7" y="535.6" width="189.8" height="22.8" fill="#fff" stroke="#cfcfcf" stroke-width="1" rx="3.5"/>
<text x="224.7" y="552.2" font-size="14" fill="#333" textLength="13.8" lengthAdjust="spacingAndGlyphs">米</text>
<rect x="213.7" y="563.6" width="189.8" height="22.8" fill="#fff" stroke="#cfcfcf" stroke-width="1" rx="3.5"/>
<text x="224.7" y="580.2" font-size="14" fill="#333" textLength="69.2" lengthAdjust="spacingAndGlyphs">米・加工品</text>
<rect x="213.7" y="591.6" width="189.8" height="22.8" fill="#fff" stroke="#cfcfcf" stroke-width="1" rx="3.5"/>
<text x="224.7" y="608.2" font-size="14" fill="#333" textLength="55.3" lengthAdjust="spacingAndGlyphs">米加工品</text>
<rect x="213.7" y="619.6" width="189.8" height="22.8" fill="#fff" stroke="#cfcfcf" stroke-width="1" rx="3.5"/>
<text x="224.7" y="636.2" font-size="14" fill="#333" textLength="27.7" lengthAdjust="spacingAndGlyphs">味噌</text>
<rect x="213.7" y="647.6" width="189.8" height="22.8" fill="#fff" stroke="#cfcfcf" stroke-width="1" rx="3.5"/>
<text x="224.7" y="664.2" font-size="14" fill="#333" textLength="83.0" lengthAdjust="spacingAndGlyphs">野菜ジュース</text>
<rect x="213.7" y="675.6" width="189.8" height="22.8" fill="#fff" stroke="#cfcfcf" stroke-width="1" rx="3.5"/>
<text x="224.7" y="692.2" font-size="14" fill="#333" textLength="41.5" lengthAdjust="spacingAndGlyphs">野菜類</text>
<rect x="213.7" y="703.6" width="189.8" height="22.8" fill="#fff" stroke="#cfcfcf" stroke-width="1" rx="3.5"/>
<text x="224.7" y="720.2" font-size="14" fill="#333" textLength="41.5" lengthAdjust="spacingAndGlyphs">油脂類</text>
<rect x="213.7" y="731.6" width="189.8" height="22.8" fill="#fff" stroke="#cfcfcf" stroke-width="1" rx="3.5"/>
<text x="224.7" y="748.2" font-size="14" fill="#333" textLength="55.3" lengthAdjust="spacingAndGlyphs">油揚げ類</text>
<rect x="213.7" y="759.6" width="189.8" height="22.8" fill="#fff" stroke="#cfcfcf" stroke-width="1" rx="3.5"/>
<text x="224.7" y="776.2" font-size="14" fill="#333" textLength="83.0" lengthAdjust="spacingAndGlyphs">洋酒・その他</text>
<rect x="213.7" y="787.6" width="189.8" height="22.8" fill="#fff" stroke="#cfcfcf" stroke-width="1" rx="3.5"/>
<text x="224.7" y="804.2" font-size="14" fill="#333" textLength="69.2" lengthAdjust="spacingAndGlyphs">葉類漬け物</text>
<rect x="213.7" y="815.6" width="189.8" height="22.8" fill="#fff" stroke="#cfcfcf" stroke-width="1" rx="3.5"/>
<text x="224.7" y="832.2" font-size="14" fill="#333" textLength="27.7" lengthAdjust="spacingAndGlyphs">卵類</text>
<rect x="213.7" y="843.6" width="189.8" height="22.8" fill="#fff" stroke="#cfcfcf" stroke-width="1" rx="3.5"/>
<text x="224.7" y="860.2" font-size="14" fill="#333" textLength="69.2" lengthAdjust="spacingAndGlyphs">緑黄色野菜</text>
<rect x="213.7" y="871.6" width="189.8" height="22.8" fill="#fff" stroke="#cfcfcf" stroke-width="1" rx="3.5"/>
<text x="224.7" y="888.2" font-size="14" fill="#333" textLength="55.3" lengthAdjust="spacingAndGlyphs">和菓子類</text>
<rect x="213.7" y="899.6" width="189.8" height="22.8" fill="#fff" stroke="#cfcfcf" stroke-width="1" rx="3.5"/>
<text x="224.7" y="916.2" font-size="14" fill="#333" textLength="69.2" lengthAdjust="spacingAndGlyphs">嗜好飲料類</text>
<rect x="446.5" y="131.5" width="999.2" height="806.2" fill="#fff" stroke="#666" stroke-width="1.4"/>
<rect x="499.5" y="181.5" width="787.2" height="676.2" fill="url(#hat)"/>
<line x1="499.5" y1="181.5" x2="499.5" y2="857.7" stroke="#d9d9d9" stroke-width="1.1"/>
<line x1="565.1" y1="181.5" x2="565.1" y2="857.7" stroke="#d9d9d9" stroke-width="1.1"/>
<line x1="630.7" y1="181.5" x2="630.7" y2="857.7" stroke="#d9d9d9" stroke-width="1.1"/>
<line x1="696.3" y1="181.5" x2="696.3" y2="857.7" stroke="#d9d9d9" stroke-width="1.1"/>
<line x1="761.9" y1="181.5" x2="761.9" y2="857.7" stroke="#d9d9d9" stroke-width="1.1"/>
<line x1="827.5" y1="181.5" x2="827.5" y2="857.7" stroke="#d9d9d9" stroke-width="1.1"/>
<line x1="893.1" y1="181.5" x2="893.1" y2="857.7" stroke="#d9d9d9" stroke-width="1.1"/>
<line x1="958.7" y1="181.5" x2="958.7" y2="857.7" stroke="#d9d9d9" stroke-width="1.1"/>
<line x1="1024.3" y1="181.5" x2="1024.3" y2="857.7" stroke="#d9d9d9" stroke-width="1.1"/>
<line x1="1089.9" y1="181.5" x2="1089.9" y2="857.7" stroke="#d9d9d9" stroke-width="1.1"/>
<line x1="1155.5" y1="181.5" x2="1155.5" y2="857.7" stroke="#d9d9d9" stroke-width="1.1"/>
<line x1="1221.1" y1="181.5" x2="1221.1" y2="857.7" stroke="#d9d9d9" stroke-width="1.1"/>
<line x1="1286.7" y1="181.5" x2="1286.7" y2="857.7" stroke="#d9d9d9" stroke-width="1.1"/>
<line x1="499.5" y1="857.7" x2="1286.7" y2="857.7" stroke="#d9d9d9" stroke-width="1.1"/>
<line x1="499.5" y1="790.1" x2="1286.7" y2="790.1" stroke="#d9d9d9" stroke-width="1.1"/>
<line x1="499.5" y1="722.5" x2="1286.7" y2="722.5" stroke="#d9d9d9" stroke-width="1.1"/>
<line x1="499.5" y1="654.8" x2="1286.7" y2="654.8" stroke="#d9d9d9" stroke-width="1.1"/>
<line x1="499.5" y1="587.2" x2="1286.7" y2="587.2" stroke="#d9d9d9" stroke-width="1.1"/>
<line x1="499.5" y1="519.6" x2="1286.7" y2="519.6" stroke="#d9d9d9" stroke-width="1.1"/>
<line x1="499.5" y1="452.0" x2="1286.7" y2="452.0" stroke="#d9d9d9" stroke-width="1.1"/>
<line x1="499.5" y1="384.4" x2="1286.7" y2="384.4" stroke="#d9d9d9" stroke-width="1.1"/>
<line x1="499.5" y1="316.7" x2="1286.7" y2="316.7" stroke="#d9d9d9" stroke-width="1.1"/>
<line x1="499.5" y1="249.1" x2="1286.7" y2="249.1" stroke="#d9d9d9" stroke-width="1.1"/>
<line x1="499.5" y1="181.5" x2="1286.7" y2="181.5" stroke="#d9d9d9" stroke-width="1.1"/>
<rect x="517.0" y="695.2" width="12.8" height="162.5" fill="#156082"/>
<rect x="535.0" y="343.1" width="12.8" height="514.6" fill="#e97132"/>
<rect x="582.6" y="760.2" width="12.8" height="97.5" fill="#156082"/>
<rect x="600.6" y="348.2" width="12.8" height="509.5" fill="#e97132"/>
<rect x="648.2" y="677.1" width="12.8" height="180.6" fill="#156082"/>
<rect x="666.2" y="406.0" width="12.8" height="451.7" fill="#e97132"/>
<rect x="713.8" y="716.1" width="12.8" height="141.6" fill="#156082"/>
<rect x="731.8" y="471.9" width="12.8" height="385.8" fill="#e97132"/>
<rect x="779.4" y="651.1" width="12.8" height="206.6" fill="#156082"/>
<rect x="797.4" y="435.0" width="12.8" height="422.7" fill="#e97132"/>
<rect x="845.0" y="743.0" width="12.8" height="114.7" fill="#156082"/>
<rect x="863.0" y="393.3" width="12.8" height="464.4" fill="#e97132"/>
<rect x="910.6" y="628.2" width="12.8" height="229.5" fill="#156082"/>
<rect x="928.6" y="421.1" width="12.8" height="436.6" fill="#e97132"/>
<rect x="976.2" y="571.9" width="12.8" height="285.8" fill="#156082"/>
<rect x="994.2" y="476.1" width="12.8" height="381.6" fill="#e97132"/>
<rect x="1041.8" y="509.0" width="12.8" height="348.7" fill="#156082"/>
<rect x="1059.8" y="444.1" width="12.8" height="413.6" fill="#e97132"/>
<rect x="1107.4" y="652.4" width="12.8" height="205.3" fill="#156082"/>
<rect x="1125.4" y="256.0" width="12.8" height="601.7" fill="#e97132"/>
<rect x="1173.0" y="666.0" width="12.8" height="191.7" fill="#156082"/>
<rect x="1191.0" y="497.0" width="12.8" height="360.7" fill="#e97132"/>
<rect x="1238.6" y="602.2" width="12.8" height="255.5" fill="#156082"/>
<rect x="1256.6" y="389.0" width="12.8" height="468.7" fill="#e97132"/>
<text x="463.2" y="862.0" font-size="13.5" fill="#595959" stroke="#595959" stroke-width="0.25" textLength="19.0" lengthAdjust="spacingAndGlyphs">0.0</text>
<text x="463.2" y="794.4" font-size="13.5" fill="#595959" stroke="#595959" stroke-width="0.25" textLength="19.0" lengthAdjust="spacingAndGlyphs">5.0</text>
<text x="455.8" y="726.8" font-size="13.5" fill="#595959" stroke="#595959" stroke-width="0.25" textLength="26.4" lengthAdjust="spacingAndGlyphs">10.0</text>
<text x="455.8" y="659.1" font-size="13.5" fill="#595959" stroke="#595959" stroke-width="0.25" textLength="26.4" lengthAdjust="spacingAndGlyphs">15.0</text>
<text x="455.8" y="591.5" font-size="13.5" fill="#595959" stroke="#595959" stroke-width="0.25" textLength="26.4" lengthAdjust="spacingAndGlyphs">20.0</text>
<text x="455.8" y="523.9" font-size="13.5" fill="#595959" stroke="#595959" stroke-width="0.25" textLength="26.4" lengthAdjust="spacingAndGlyphs">25.0</text>
<text x="455.8" y="456.3" font-size="13.5" fill="#595959" stroke="#595959" stroke-width="0.25" textLength="26.4" lengthAdjust="spacingAndGlyphs">30.0</text>
<text x="455.8" y="388.7" font-size="13.5" fill="#595959" stroke="#595959" stroke-width="0.25" textLength="26.4" lengthAdjust="spacingAndGlyphs">35.0</text>
<text x="455.8" y="321.0" font-size="13.5" fill="#595959" stroke="#595959" stroke-width="0.25" textLength="26.4" lengthAdjust="spacingAndGlyphs">40.0</text>
<text x="455.8" y="253.4" font-size="13.5" fill="#595959" stroke="#595959" stroke-width="0.25" textLength="26.4" lengthAdjust="spacingAndGlyphs">45.0</text>
<text x="455.8" y="185.8" font-size="13.5" fill="#595959" stroke="#595959" stroke-width="0.25" textLength="26.4" lengthAdjust="spacingAndGlyphs">50.0</text>
<text x="510.3" y="885.0" font-size="14.5" fill="#595959" textLength="43.9" lengthAdjust="spacingAndGlyphs">北海道</text>
<text x="583.5" y="885.0" font-size="14.5" fill="#595959" textLength="28.7" lengthAdjust="spacingAndGlyphs">東北</text>
<text x="641.8" y="885.0" font-size="14.5" fill="#595959" textLength="38.4" lengthAdjust="spacingAndGlyphs">関東 Ⅰ</text>
<text x="706.6" y="885.0" font-size="14.5" fill="#595959" textLength="40.0" lengthAdjust="spacingAndGlyphs">関東 Ⅱ</text>
<text x="780.1" y="885.0" font-size="14.5" fill="#595959" textLength="29.3" lengthAdjust="spacingAndGlyphs">東海</text>
<text x="846.0" y="885.0" font-size="14.5" fill="#595959" textLength="28.7" lengthAdjust="spacingAndGlyphs">北陸</text>
<text x="904.2" y="885.0" font-size="14.5" fill="#595959" textLength="38.4" lengthAdjust="spacingAndGlyphs">近畿 Ⅰ</text>
<text x="969.0" y="885.0" font-size="14.5" fill="#595959" textLength="40.0" lengthAdjust="spacingAndGlyphs">近畿 Ⅱ</text>
<text x="1042.4" y="885.0" font-size="14.5" fill="#595959" textLength="29.3" lengthAdjust="spacingAndGlyphs">中国</text>
<text x="1108.0" y="885.0" font-size="14.5" fill="#595959" textLength="29.3" lengthAdjust="spacingAndGlyphs">四国</text>
<text x="1166.4" y="885.0" font-size="14.5" fill="#595959" textLength="43.9" lengthAdjust="spacingAndGlyphs">北九州</text>
<text x="1232.0" y="885.0" font-size="14.5" fill="#595959" textLength="43.9" lengthAdjust="spacingAndGlyphs">南九州</text>
<rect x="459" y="141.2" width="138" height="21.6" fill="url(#btn)"/>
<text x="463.2" y="156.3" font-size="13.5" fill="#111" textLength="130.0" lengthAdjust="spacingAndGlyphs">合計 / 平均摂取量 (g)</text>
<rect x="459" y="902" width="106" height="22" fill="url(#btn)"/>
<text x="463.2" y="917.5" font-size="13.5" fill="#111" textLength="80.0" lengthAdjust="spacingAndGlyphs">地域ブロック</text>
<path d="M548.5 911.5 H558.5 L553.5 916.5 Z" fill="#222" stroke="none" stroke-width="0"/>
<rect x="1306" y="483.1" width="126" height="21.7" fill="url(#btn)"/>
<path d="M1404.9 496.0 H1411.6 L1408.2 499.6 Z" fill="#111" stroke="none" stroke-width="0"/>
<path d="M1411.8 487.5 H1426 L1420.6 493.7 V501.1 H1417.2 V493.7 Z" fill="#7a7a7a" stroke="none" stroke-width="0"/>
<rect x="1306" y="506.1" width="126" height="21.7" fill="url(#btn)"/>
<path d="M1404.9 519.0 H1411.6 L1408.2 522.6 Z" fill="#111" stroke="none" stroke-width="0"/>
<path d="M1411.8 510.5 H1426 L1420.6 516.7 V524.1 H1417.2 V516.7 Z" fill="#7a7a7a" stroke="none" stroke-width="0"/>
<text x="1310.8" y="499.0" font-size="13.5" fill="#111" textLength="54.4" lengthAdjust="spacingAndGlyphs">日付 (年)</text>
<text x="1310.8" y="521.8" font-size="13" fill="#111" textLength="38.7" lengthAdjust="spacingAndGlyphs">食品群</text>
<rect x="1312" y="538.9" width="9.2" height="8" fill="#156082"/>
<rect x="1312" y="567" width="9.2" height="8" fill="#e97132"/>
<text x="1323.9" y="547.0" font-size="13" fill="#595959" textLength="69.5" lengthAdjust="spacingAndGlyphs">2023 - 牛肉</text>
<text x="1323.9" y="575.2" font-size="13" fill="#595959" textLength="100.4" lengthAdjust="spacingAndGlyphs">2023 - 生魚介類</text>
<circle cx="447" cy="132" r="6" fill="#fff" stroke="#5c5c5c" stroke-width="2"/>
<circle cx="946" cy="132" r="6" fill="#fff" stroke="#5c5c5c" stroke-width="2"/>
<circle cx="1445.8" cy="132" r="6" fill="#fff" stroke="#5c5c5c" stroke-width="2"/>
<circle cx="447" cy="535" r="6" fill="#fff" stroke="#5c5c5c" stroke-width="2"/>
<circle cx="1445.8" cy="535" r="6" fill="#fff" stroke="#5c5c5c" stroke-width="2"/>
<circle cx="447" cy="938" r="6" fill="#fff" stroke="#5c5c5c" stroke-width="2"/>
<circle cx="946" cy="938" r="6" fill="#fff" stroke="#5c5c5c" stroke-width="2"/>
<circle cx="1445.8" cy="938" r="6" fill="#fff" stroke="#5c5c5c" stroke-width="2"/>
<rect x="394.7" y="131.1" width="34" height="33.4" fill="#fff" stroke="#666" stroke-width="1.1"/>
<path d="M410.4 136.2 V156.6 M400.2 146.4 H420.7" fill="none" stroke="#2e9e5b" stroke-width="1.5"/>
<rect x="394.7" y="177.8" width="34" height="33.6" fill="#fff" stroke="#666" stroke-width="1.1"/>
<path d="M409.6 194 C413 190.6 417.4 187 420 186.2 C420.8 186 420.9 186.8 420.5 187.6 C418.7 190.8 415.2 194.6 412 197.3 Z" fill="#fff" stroke="#383838" stroke-width="1.1"/>
<path d="M409.5 194.3 C406.9 194 405.4 196 404.8 197.6 C404 199.6 402 200.4 399.6 200.4 C402 202.7 407.4 203.1 410 200.7 C412 198.9 412.5 196.9 411.7 195.7 Z" fill="#84bdec" stroke="#1a66bd" stroke-width="1.2"/>
</g>
</g>
<rect x="1456.2" y="98" width="26.2" height="857" fill="#e4e9f1"/>
<rect x="0" y="953" width="1483" height="39" fill="#e4e9f1"/>
<path d="M38.3 965.2 L32.3 971.7 L38.3 978.2" fill="none" stroke="#8a8a8a" stroke-width="1.3"/>
<path d="M72.8 965.2 L78.8 971.7 L72.8 978.2" fill="none" stroke="#8a8a8a" stroke-width="1.3"/>
<text x="152.5" y="979.6" font-size="19.5" fill="#333" textLength="36.4" lengthAdjust="spacingAndGlyphs">data</text>
<line x1="207.4" y1="961.2" x2="207.4" y2="984.7" stroke="#c8c8c8" stroke-width="1"/>
<path d="M208.5 953 A4.3 4.3 0 0 1 212.8 957.3 V984 A4.3 4.3 0 0 0 217.1 988.3 H274.8 A4.3 4.3 0 0 0 279.1 984 V957.3 A4.3 4.3 0 0 1 283.4 953 Z" fill="#d6d9df" stroke="none" stroke-width="0"/>
<path d="M208.5 953 A4.3 4.3 0 0 1 212.8 957.3 V983.6 A4.3 4.3 0 0 0 217.1 987.9 H274.8 A4.3 4.3 0 0 0 279.1 983.6 V957.3 A4.3 4.3 0 0 1 283.4 953 Z" fill="#fff" stroke="none" stroke-width="0"/>
<text x="225.8" y="975.6" font-size="19.5" fill="#222" textLength="41.2" lengthAdjust="spacingAndGlyphs">pivot</text>
<rect x="223" y="983" width="46" height="2" fill="#107c41"/>
<line x1="284.4" y1="961.2" x2="284.4" y2="984.7" stroke="#c8c8c8" stroke-width="1"/>
<path d="M344.3 964.5 V979.5 M336.8 972 H351.8" fill="none" stroke="#333" stroke-width="1.5"/>
<g fill="#444"><circle cx="893.3" cy="966.6" r="1.2"/><circle cx="893.3" cy="971.8" r="1.2"/><circle cx="893.3" cy="977" r="1.2"/></g>
<rect x="914" y="962" width="545" height="21" fill="#f5f5f5" rx="10.5"/>
<path d="M927.8 968.4 L922.2 972.4 L927.8 976.4 Z" fill="#727272" stroke="#727272" stroke-width="2.4" stroke-linejoin="round"/>
<rect x="935.2" y="966.8" width="422" height="11.4" fill="#727272" rx="5.7"/>
<path d="M1445.6 968.4 L1451.2 972.4 L1445.6 976.4 Z" fill="#727272" stroke="#727272" stroke-width="2.4" stroke-linejoin="round"/>
<rect x="1458.8" y="99" width="21.3" height="857" fill="#f5f5f5" rx="10.6"/>
<path d="M1465.6 111.4 L1469.5 105.8 L1473.4 111.4 Z" fill="#727272" stroke="#727272" stroke-width="2.4" stroke-linejoin="round"/>
<rect x="1464" y="118.8" width="11" height="457.6" fill="#727272" rx="5.5"/>
<path d="M1465.6 942.6 L1469.5 948.2 L1473.4 942.6 Z" fill="#727272" stroke="#727272" stroke-width="2.4" stroke-linejoin="round"/>
<rect x="1482.4" y="98" width="437.6" height="894" fill="#f0f0f0"/>
<rect x="1482.4" y="98" width="437.6" height="3" fill="url(#hsh)"/>
<line x1="1482.6" y1="99" x2="1482.6" y2="991" stroke="#b0b0b0" stroke-width="0.9"/>
<text x="1497.9" y="131.4" font-size="17.5" fill="#222" stroke="#222" stroke-width="0.7" textLength="183.7" lengthAdjust="spacingAndGlyphs">ピボットグラフのフィールド</text>
<path d="M1843.6 120.8 L1851.6 129.4 L1859.6 120.8" fill="none" stroke="#333" stroke-width="1.3"/>
<path d="M1886 119 L1898.6 131 M1898.6 119 L1886 131" fill="none" stroke="#333" stroke-width="1.3"/>
<text x="1498.8" y="166.6" font-size="14.5" fill="#222" stroke="#222" stroke-width="0.7" textLength="60.2" lengthAdjust="spacingAndGlyphs">アクティブ</text>
<rect x="1497.9" y="178.7" width="61.8" height="3.2" fill="#107c41"/>
<text x="1588.8" y="166.6" font-size="14.5" fill="#333" textLength="35.6" lengthAdjust="spacingAndGlyphs">すべて</text>
<text x="1498.8" y="210.8" font-size="14.5" fill="#333" textLength="275.7" lengthAdjust="spacingAndGlyphs">レポートに追加するフィールドを選択してください:</text>
<rect x="1848.6" y="187.4" width="56" height="34" fill="#fff" stroke="#8a8a8a" stroke-width="1"/>
<path d="M1868.20 194.61 L1872.20 194.61 L1872.78 197.06 L1874.92 198.30 L1877.33 197.58 L1879.33 201.03 L1877.50 202.77 L1877.50 205.23 L1879.33 206.97 L1877.33 210.42 L1874.92 209.70 L1872.78 210.94 L1872.20 213.39 L1868.20 213.39 L1867.62 210.94 L1865.48 209.70 L1863.07 210.42 L1861.07 206.97 L1862.90 205.23 L1862.90 202.77 L1861.07 201.03 L1863.07 197.58 L1865.48 198.30 L1867.62 197.06 Z" fill="none" stroke="#333" stroke-width="1.3" stroke-linejoin="round"/>
<circle cx="1870.2" cy="204" r="3.5" fill="none" stroke="#333" stroke-width="1.2"/>
<path d="M1890 203 L1893.4 206.4 L1896.8 203" fill="none" stroke="#333" stroke-width="1.3"/>
<rect x="1498.6" y="239.5" width="406" height="28.8" fill="#fff" stroke="#8c8c8c" stroke-width="1"/>
<text x="1506.4" y="258.2" font-size="14.5" fill="#767676" textLength="29.3" lengthAdjust="spacingAndGlyphs">検索</text>
<g stroke="#333" fill="none" stroke-width="1.3" stroke-linecap="round"><circle cx="1893.2" cy="250.6" r="6.2"/><path d="M1888.6 255.2 L1881.4 262.6"/></g>
<rect x="1498.6" y="291.3" width="406" height="250.6" fill="#fff" stroke="#999" stroke-width="1"/>
<g clip-path="url(#cfl)">
<path d="M1507.2 306.6 H1514.8 V300.4" fill="none" stroke="#444" stroke-width="1.2"/>
<rect x="1522.8" y="293.8" width="18.6" height="18.6" fill="#fff"/>
<rect x="1522.8" y="293.8" width="18.6" height="3.6" fill="#c4c4c4"/>
<g stroke="#8c8c8c" fill="none" stroke-width="1.3"><path d="M1522.8 302.4 H1541.4 M1522.8 307.5 H1541.4 M1528.8 297.4 V312.4 M1535.1 297.4 V312.4"/></g>
<g stroke="#3a3a3a" fill="none" stroke-width="1.2"><rect x="1522.8" y="293.8" width="18.6" height="18.6"/><path d="M1522.8 297.4 H1541.4"/></g>
<text x="1545.3" y="309.0" font-size="15.5" fill="#222" textLength="330.0" lengthAdjust="spacingAndGlyphs" font-weight="bold">_00450_mhlw_00450171_hyo6_full_lis...</text>
<rect x="1546.5" y="316.5" width="15" height="15" fill="#fff" stroke="#8a8a8a" stroke-width="1"/>
<text x="1569.4" y="333.0" font-size="15" fill="#222" textLength="29.3" lengthAdjust="spacingAndGlyphs">日付</text>
<rect x="1546" y="347" width="16" height="16" fill="#107c41"/>
<path d="M1549.6 355.2 L1552.6 358.2 L1558.6 351.8" fill="none" stroke="#fff" stroke-width="1.4"/>
<text x="1569.4" y="364.0" font-size="15" fill="#222" textLength="76.7" lengthAdjust="spacingAndGlyphs" font-weight="bold">地域ブロック</text>
<rect x="1546.5" y="378.5" width="15" height="15" fill="#fff" stroke="#8a8a8a" stroke-width="1"/>
<text x="1569.4" y="395.0" font-size="15" fill="#222" textLength="73.8" lengthAdjust="spacingAndGlyphs">食品群番号</text>
<rect x="1546" y="409" width="16" height="16" fill="#107c41"/>
<path d="M1549.6 417.2 L1552.6 420.2 L1558.6 413.8" fill="none" stroke="#fff" stroke-width="1.4"/>
<text x="1569.4" y="426.0" font-size="15" fill="#222" textLength="44.2" lengthAdjust="spacingAndGlyphs" font-weight="bold">食品群</text>
<path d="M1863.6 411.6 H1878.4 L1873 418.4 V425.6 H1869 V418.4 Z" fill="none" stroke="#444" stroke-width="1.1" stroke-linejoin="round"/>
<rect x="1546" y="440" width="16" height="16" fill="#107c41"/>
<path d="M1549.6 448.2 L1552.6 451.2 L1558.6 444.8" fill="none" stroke="#fff" stroke-width="1.4"/>
<text x="1569.4" y="457.0" font-size="15" fill="#222" textLength="103.1" lengthAdjust="spacingAndGlyphs" font-weight="bold">平均摂取量 (g)</text>
<rect x="1546.5" y="471.5" width="15" height="15" fill="#fff" stroke="#8a8a8a" stroke-width="1"/>
<text x="1569.4" y="488.0" font-size="15" fill="#222" textLength="72.1" lengthAdjust="spacingAndGlyphs">中央値 (g)</text>
<rect x="1546.5" y="502.5" width="15" height="15" fill="#fff" stroke="#8a8a8a" stroke-width="1"/>
<text x="1569.4" y="519.0" font-size="15" fill="#222" textLength="59.6" lengthAdjust="spacingAndGlyphs">標準偏差</text>
<rect x="1546" y="533" width="16" height="16" fill="#107c41"/>
<path d="M1549.6 541.2 L1552.6 544.2 L1558.6 537.8" fill="none" stroke="#fff" stroke-width="1.4"/>
<text x="1569.4" y="550.0" font-size="15" fill="#222" textLength="62.0" lengthAdjust="spacingAndGlyphs" font-weight="bold">日付 (年)</text>
<path d="M1863.6 535.6 H1878.4 L1873 542.4 V549.6 H1869 V542.4 Z" fill="none" stroke="#444" stroke-width="1.1" stroke-linejoin="round"/>
</g>
<rect x="1882.8" y="292" width="21.6" height="249.4" fill="#f0f0f0"/>
<path d="M1889.6 305.8 L1893.6 300.2 L1897.6 305.8 Z" fill="#727272" stroke="#727272" stroke-width="2.4" stroke-linejoin="round"/>
<rect x="1887.9" y="313.2" width="11.4" height="150.4" fill="#767676"/>
<path d="M1889.6 528.4 L1893.6 534 L1897.6 528.4 Z" fill="#727272" stroke="#727272" stroke-width="2.4" stroke-linejoin="round"/>
<line x1="1500" y1="562.6" x2="1909" y2="562.6" stroke="#c4c4c4" stroke-width="1" stroke-dasharray="1 2"/>
<text x="1503.6" y="583.0" font-size="14.5" fill="#333" textLength="270.9" lengthAdjust="spacingAndGlyphs">次のボックス間でフィールドをドラッグしてください:</text>
<path d="M1507 611.2 H1521.2 L1516 617.6 V624.8 H1512.2 V617.6 Z" fill="#8a8a8a" stroke="none" stroke-width="0"/>
<text x="1530.0" y="624.6" font-size="14.5" fill="#222" textLength="50.8" lengthAdjust="spacingAndGlyphs">フィルター</text>
<rect x="1502.2" y="634" width="193.8" height="124.8" fill="#fff"/>
<line x1="1703.4" y1="608.3" x2="1703.4" y2="925" stroke="#c6c6c6" stroke-width="1"/>
<g stroke="#8a8a8a" stroke-width="1"><path d="M1714 613 V623.6" stroke-width="1.8"/><path d="M1716.6 613 V623.6 M1718.8 613 V623.6 M1721 613 V623.6 M1722.8 613 V623.6"/></g>
<text x="1734.4" y="625.0" font-size="15" fill="#222" textLength="77.9" lengthAdjust="spacingAndGlyphs">凡例 (系列)</text>
<rect x="1706.2" y="634" width="199.8" height="124.8" fill="#fff"/>
<rect x="1707.6" y="636.5" width="197" height="26" fill="#fff" stroke="#b4b4b4" stroke-width="1"/>
<text x="1718.0" y="655.7" font-size="15" fill="#222" textLength="62.3" lengthAdjust="spacingAndGlyphs">日付 (年)</text>
<path d="M1886.4 647.9 L1890.1 651.5 L1893.8 647.9" fill="none" stroke="#333" stroke-width="1.3"/>
<rect x="1707.6" y="665.8" width="197" height="26" fill="#fff" stroke="#b4b4b4" stroke-width="1"/>
<text x="1718.0" y="685.0" font-size="15" fill="#222" textLength="44.0" lengthAdjust="spacingAndGlyphs">食品群</text>
<path d="M1886.4 677.2 L1890.1 680.8 L1893.8 677.2" fill="none" stroke="#333" stroke-width="1.3"/>
<line x1="1502.2" y1="766.3" x2="1906.2" y2="766.3" stroke="#c6c6c6" stroke-width="1"/>
<g stroke="#8a8a8a" stroke-width="1"><path d="M1508 780.4 H1520.2" stroke-width="2"/><path d="M1508 783.6 H1520.2 M1508 786 H1520.2 M1508 788.4 H1520.2"/></g>
<text x="1530.3" y="790.8" font-size="15" fill="#222" textLength="92.9" lengthAdjust="spacingAndGlyphs">軸 (分類項目)</text>
<rect x="1502.2" y="800.5" width="193.8" height="124.4" fill="#fff"/>
<rect x="1503.6" y="802.8" width="191" height="26" fill="#fff" stroke="#b4b4b4" stroke-width="1"/>
<text x="1514.0" y="822.0" font-size="15" fill="#222" textLength="70.6" lengthAdjust="spacingAndGlyphs">地域ブロック</text>
<path d="M1676.4 814.2 L1680.1 817.8 L1683.8 814.2" fill="none" stroke="#333" stroke-width="1.3"/>
<path d="M1722.6 779 H1713 L1718.2 783.8 L1713 788.6 H1722.8 M1722.6 779 V780.6 M1722.8 788.6 V787" fill="none" stroke="#8a8a8a" stroke-width="1.2"/>
<text x="1734.5" y="790.8" font-size="15" fill="#222" textLength="14.5" lengthAdjust="spacingAndGlyphs">値</text>
<rect x="1706.2" y="800.5" width="200" height="124.4" fill="#fff"/>
<rect x="1707.6" y="802.8" width="197" height="26" fill="#fff" stroke="#b4b4b4" stroke-width="1"/>
<text x="1718.0" y="822.0" font-size="15" fill="#222" textLength="148.6" lengthAdjust="spacingAndGlyphs">合計 / 平均摂取量 (g)</text>
<path d="M1886.4 814.2 L1890.1 817.8 L1893.8 814.2" fill="none" stroke="#333" stroke-width="1.3"/>
<rect x="1506.7" y="959.2" width="15" height="14.6" fill="#fff" stroke="#666" stroke-width="1" rx="2"/>
<text x="1530.3" y="971.8" font-size="14.5" fill="#222" textLength="161.4" lengthAdjust="spacingAndGlyphs">レイアウトの更新を保留する</text>
<rect x="1862.6" y="950.8" width="43" height="29.6" fill="#f0f0f0" stroke="#dadada" stroke-width="1"/>
<text x="1869.5" y="971.6" font-size="14.5" fill="#b0b0b0" textLength="29.2" lengthAdjust="spacingAndGlyphs">更新</text>
</svg></body></html>
